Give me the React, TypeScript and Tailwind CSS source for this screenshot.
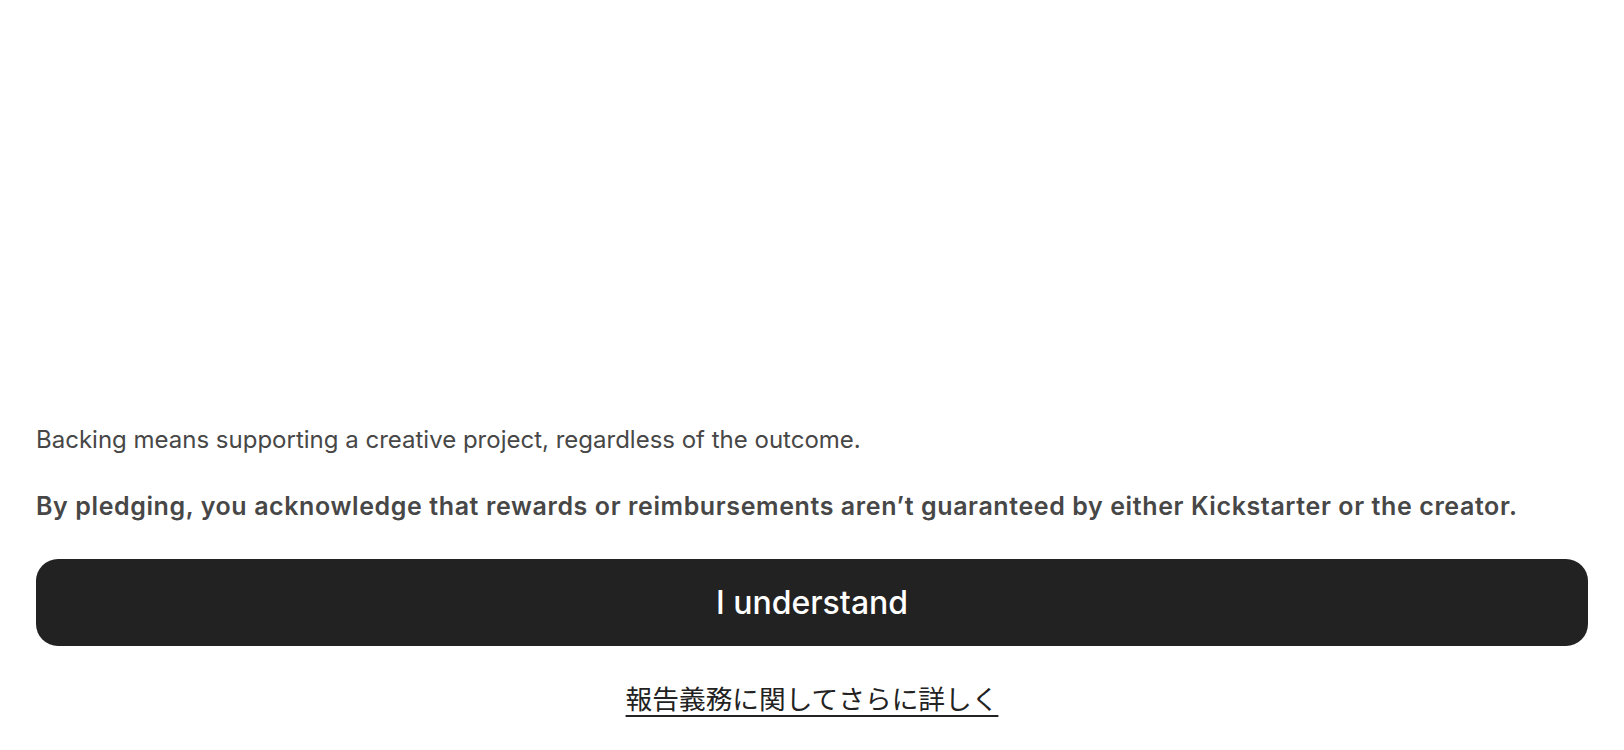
import React from "react";

const App = () => {
  return (
    <div className="flex h-[750px] w-full flex-col justify-end bg-white px-9 pb-[32px] font-['Inter','Noto_Sans_CJK_JP',sans-serif] text-[#474747]">
      <p className="text-[24px] leading-[30px]">
        Backing means supporting a creative project, regardless of the outcome.
      </p>
      <p className="mt-[36px] text-[25px] font-semibold leading-[30px] tracking-[0.6px]">
        By pledging, you acknowledge that rewards or reimbursements aren’t guaranteed by either Kickstarter or the creator.
      </p>
      <button className="mt-[38px] h-[87px] w-full rounded-[22px] bg-[#222222] text-[32px] font-medium text-white">
        I understand
      </button>
      <div className="mt-[34px] flex justify-center">
        <a
          href="#"
          className="text-[26.7px] leading-[38px] text-[#222222] underline decoration-2 underline-offset-[6px]"
        >
          報告義務に関してさらに詳しく
        </a>
      </div>
    </div>
  );
};

export default App;
